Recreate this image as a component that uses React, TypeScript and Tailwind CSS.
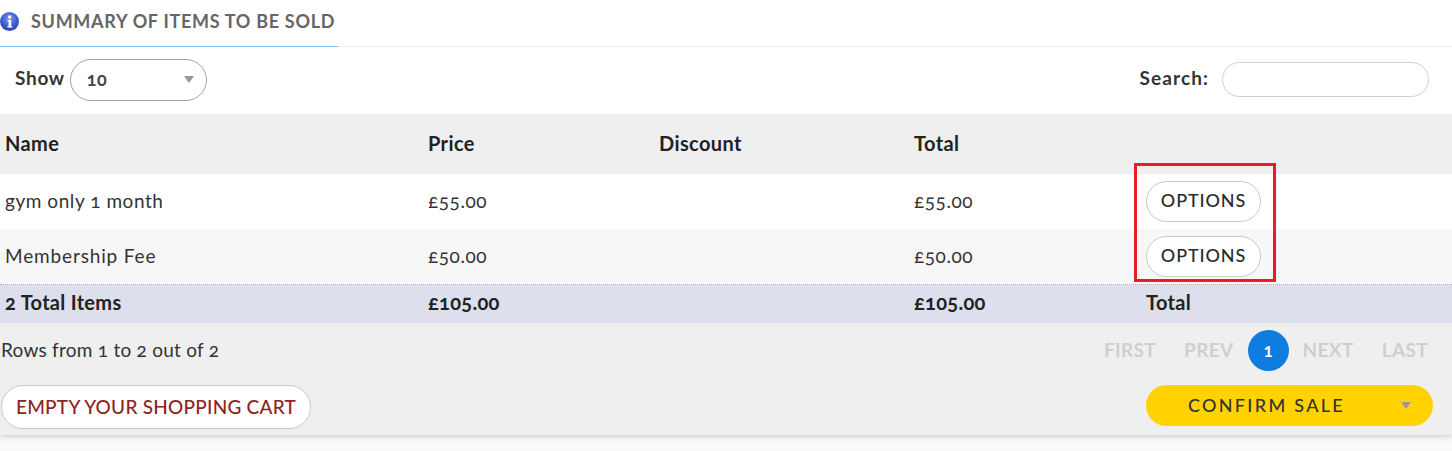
const rowGrid = "grid grid-cols-[423px_231px_255px_232px_1fr] items-center pl-[5px]";

function InfoIcon() {
  return (
    <svg width="19" height="19" viewBox="0 0 19 19" className="shrink-0">
      <defs>
        <radialGradient id="ig" cx="50%" cy="35%" r="65%">
          <stop offset="0%" stopColor="#7f9be8" />
          <stop offset="60%" stopColor="#3f5fd0" />
          <stop offset="100%" stopColor="#2a3fa8" />
        </radialGradient>
      </defs>
      <circle cx="9.5" cy="9.5" r="9.5" fill="url(#ig)" />
      <circle cx="9.7" cy="5" r="1.7" fill="#ffffff" />
      <path d="M7.5 8h3.7v6.2h1.1v1.3H7.4v-1.3h1.2V9.3H7.5z" fill="#ffffff" />
    </svg>
  );
}

function OptionsButton() {
  return (
    <button className="flex h-[41px] w-[115px] items-center justify-center rounded-full border border-[#c8c8c8] bg-white pb-[2px] text-[18px] font-medium tracking-[0.9px] text-[#2b2b2b]">
      OPTIONS
    </button>
  );
}

function Caret({ color }: { color: string }) {
  return (
    <svg width="10" height="7" viewBox="0 0 10 7" className="shrink-0">
      <path d="M0 0h10L5 7z" fill={color} />
    </svg>
  );
}

const pagerClass = "text-[19px] font-bold tracking-[0.35px] text-[#cfcfcf]";

export default function App() {
  return (
    <div className="relative h-[451px] w-[1452px] overflow-hidden bg-[#fafafa] font-['Lato','Liberation_Sans',sans-serif] text-[#2b2b2b] oldstyle-nums">
      <div className="bg-white shadow-[0_1px_6px_rgba(0,0,0,0.22)]">
        <div className="flex h-[47px] border-b border-[#eeeeee]">
          <div className="-mb-px flex h-[47px] w-[338px] items-center gap-[12px] border-b border-[#8cc6f0] pb-[4px]">
            <InfoIcon />
            <span className="text-[18px] font-bold tracking-[0.7px] text-[#666666]">SUMMARY OF ITEMS TO BE SOLD</span>
          </div>
        </div>

        <div className="flex h-[67px] items-center justify-between pb-[2px] pl-[15px] pr-[23px]">
          <div className="flex items-center gap-[5px]">
            <span className="pb-[2px] text-[19px] font-bold tracking-[0.7px] text-[#333333]">Show</span>
            <div className="flex h-[42px] w-[137px] items-center justify-between rounded-full border border-[#a5a5a5] pl-[16px] pr-[12px]">
              <span className="text-[18px] font-bold tracking-[0.4px] text-[#444444]">10</span>
              <Caret color="#999999" />
            </div>
          </div>
          <div className="flex items-center gap-[13px]">
            <span className="pb-[2px] text-[19px] font-bold tracking-[1.1px] text-[#333333]">Search:</span>
            <div className="h-[35px] w-[207px] rounded-full border border-[#d0d0d0] bg-white" />
          </div>
        </div>

        <div className={`${rowGrid} h-[60px] bg-[#efefef] pb-[2px] text-[20px] font-bold tracking-[0.4px] text-[#222222]`}>
          <span>Name</span>
          <span>Price</span>
          <span>Discount</span>
          <span>Total</span>
          <span />
        </div>

        <div className={`${rowGrid} h-[55px] bg-white text-[19px] tracking-[0.55px] text-[#333333]`}>
          <span>gym only 1 month</span>
          <span>£55.00</span>
          <span />
          <span>£55.00</span>
          <OptionsButton />
        </div>

        <div className={`${rowGrid} h-[56px] border-b border-dotted border-[#aaaaaa] bg-[#f7f7f7] text-[19px] tracking-[0.55px] text-[#333333]`}>
          <span className="tracking-[0.85px]">Membership Fee</span>
          <span>£50.00</span>
          <span />
          <span>£50.00</span>
          <OptionsButton />
        </div>

        <div className={`${rowGrid} h-[38px] bg-[#dddfed] pb-[4px] text-[20px] font-bold tracking-[0.3px] text-[#222222]`}>
          <span>2 Total Items</span>
          <span>£105.00</span>
          <span />
          <span>£105.00</span>
          <span>Total</span>
        </div>

        <div className="h-[112px] bg-[#efefef]">
          <div className="flex h-[55px] items-center justify-between pl-[1px] pr-[24px]">
            <span className="text-[19px] tracking-[0.25px] text-[#333333]">Rows from 1 to 2 out of 2</span>
            <div className="flex items-center">
              <span className={pagerClass}>FIRST</span>
              <span className={`${pagerClass} ml-[28px]`}>PREV</span>
              <span className="ml-[14px] flex h-[41px] w-[41px] items-center justify-center rounded-full bg-[#0f7ddf] text-[16px] font-bold text-white lining-nums">1</span>
              <span className={`${pagerClass} ml-[14px]`}>NEXT</span>
              <span className={`${pagerClass} ml-[28px]`}>LAST</span>
            </div>
          </div>
          <div className="mt-[7px] flex items-start justify-between pl-[1px] pr-[19px]">
            <button className="flex h-[44px] w-[310px] items-center justify-center rounded-full border border-[#c8c8c8] bg-white text-[19px] font-medium tracking-[0.25px] text-[#8e2323]">
              EMPTY YOUR SHOPPING CART
            </button>
            <button className="flex h-[41px] w-[287px] items-center justify-between rounded-full bg-[#ffd200] pl-[42px] pr-[22px]">
              <span className="text-[18px] font-medium tracking-[2.3px] text-[#333333]">CONFIRM SALE</span>
              <Caret color="#999999" />
            </button>
          </div>
        </div>
      </div>

      <div className="pointer-events-none absolute left-[1134px] top-[163px] h-[119px] w-[142px] border-[3px] border-[#ed1c24]" />
    </div>
  );
}
